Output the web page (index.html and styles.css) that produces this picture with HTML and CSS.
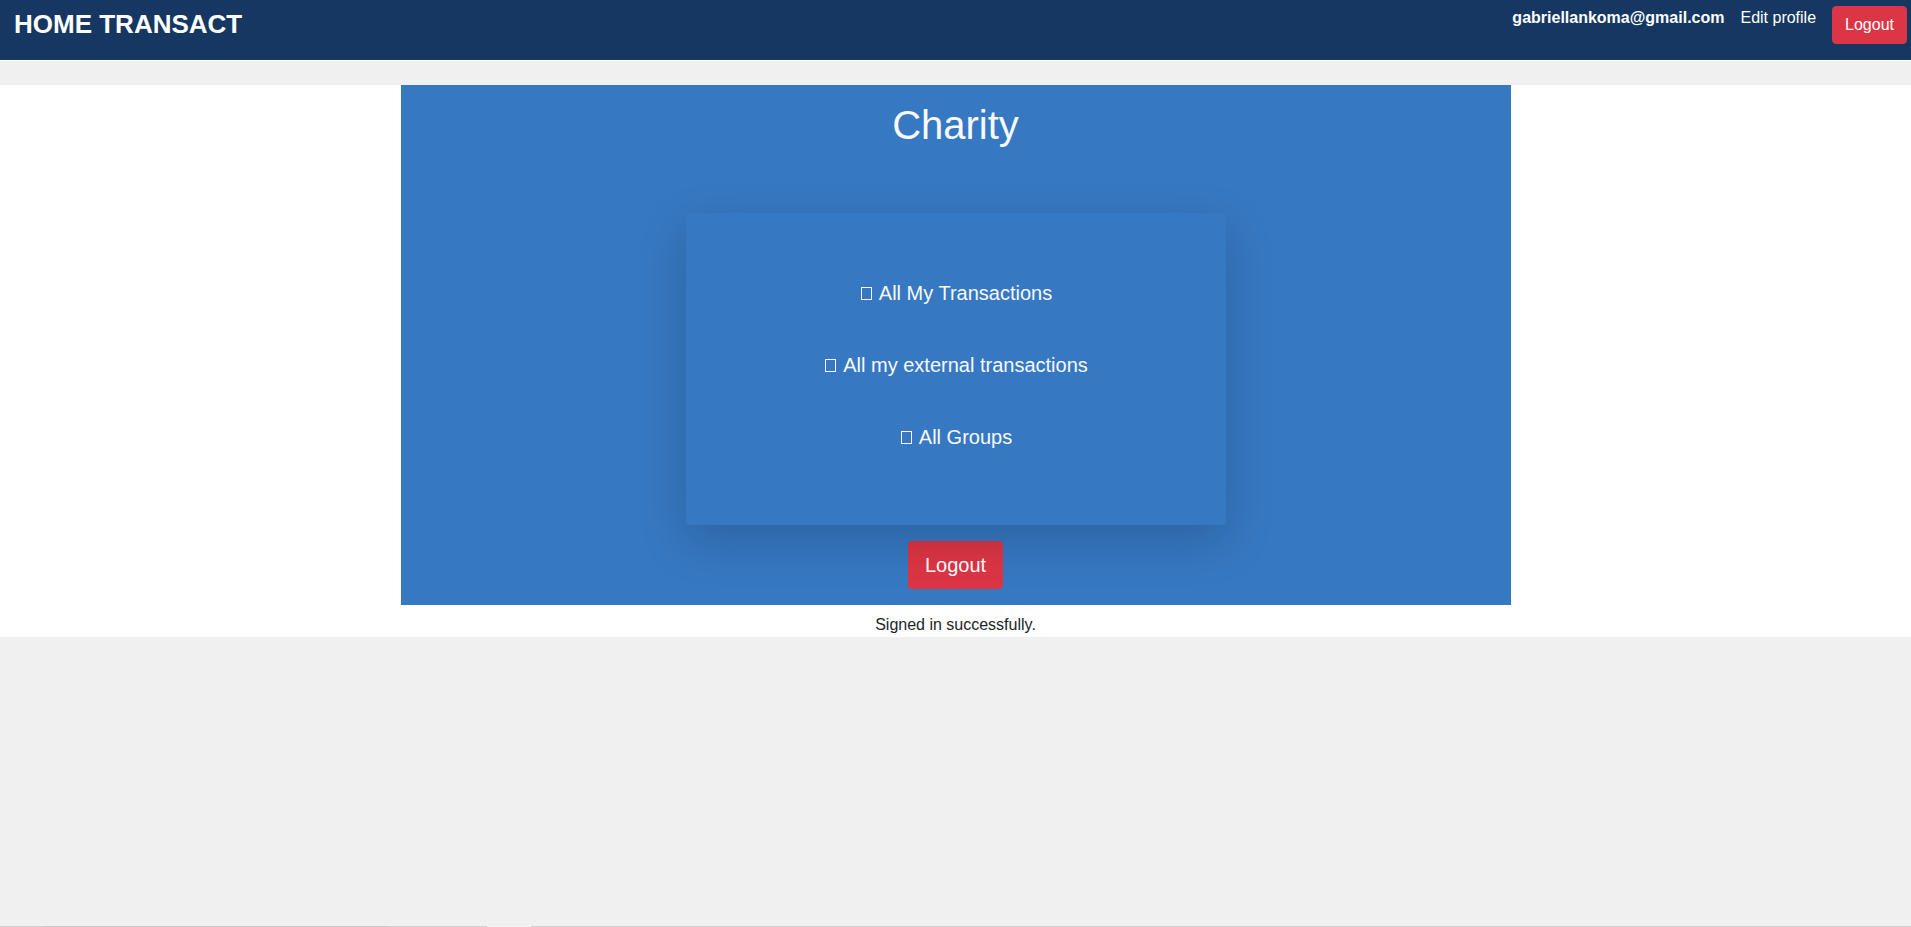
FILE: index.html
```html
<!DOCTYPE html>
<html lang="en">
<head>
<meta charset="utf-8">
<title>Home Transact</title>
<link rel="stylesheet" href="styles.css">
</head>
<body>
<header class="navbar">
  <a class="brand" href="#">HOME TRANSACT</a>
  <nav class="nav">
    <a class="nav-link user" href="#">gabriellankoma@gmail.com</a>
    <a class="nav-link" href="#">Edit profile</a>
    <button class="btn" type="button">Logout</button>
  </nav>
</header>
<main class="content">
  <section class="container">
    <h1 class="title">Charity</h1>
    <div class="card">
      <a class="card-link" href="#"><span class="glyph"></span>All My Transactions</a>
      <a class="card-link" href="#"><span class="glyph"></span>All my external transactions</a>
      <a class="card-link" href="#"><span class="glyph"></span>All Groups</a>
    </div>
    <button class="btn btn-lg" type="button">Logout</button>
  </section>
  <p class="notice">Signed in successfully.</p>
</main>
<footer class="edge"></footer>
</body>
</html>
```
FILE: styles.css
```css
* { box-sizing: border-box; }
body {
  margin: 0;
  min-height: 100vh;
  display: flex;
  flex-direction: column;
  background: #f0f0f0;
  color: #212529;
  font: 16px/24px "Liberation Sans", Arial, sans-serif;
}
a { color: #fff; text-decoration: none; }
.navbar {
  display: flex;
  justify-content: space-between;
  align-items: flex-start;
  min-height: 61px;
  padding: 6px 4px 0 14px;
  background: #153762;
  border-bottom: 1px solid #fff;
}
.brand { font-size: 26px; line-height: 36px; font-weight: bold; }
.nav { display: flex; align-items: flex-start; gap: 16px; }
.btn {
  padding: 6px 12px;
  border: 1px solid #dc3545;
  border-radius: 4px;
  background: #dc3545;
  color: #fff;
  font: inherit;
}
.user { font-weight: bold; }
.content { margin-top: 24px; background: #fff; text-align: center; }
.container {
  width: 100%;
  max-width: 1110px;
  margin: 0 auto;
  padding: 16px;
  background: #3678c2;
}
.title {
  margin: 0 0 64px;
  color: #f8f9fa;
  font-size: 40px;
  line-height: 48px;
  font-weight: normal;
}
.card {
  position: relative;
  display: flex;
  flex-direction: column;
  align-items: center;
  gap: 24px;
  max-width: 540px;
  margin: 0 auto 16px;
  padding: 56px 16px 64px;
  border-radius: 4px;
  background: #3678c2;
  box-shadow: 0 16px 48px rgba(0, 0, 0, .175);
}
.card-link { padding: 9px 16px; color: #f8f9fa; font-size: 20px; line-height: 30px; }
.glyph {
  display: inline-block;
  width: 11px;
  height: 13px;
  margin: 0 7px 0 2px;
  border: 1px solid currentColor;
}
.btn-lg {
  display: block;
  margin: 0 auto;
  padding: 8px 16px;
  font-size: 20px;
  line-height: 30px;
}
.notice { margin: 0; padding: 8px 0 0; }
.edge {
  height: 1px;
  margin-top: auto;
  background: linear-gradient(to right,
    #d2d2d6 44px, #c6c6c6 44px 388px,
    #d2d2d6 388px 487px, #f4f4f4 487px 531px,
    #d2d2d6 531px);
}
```
